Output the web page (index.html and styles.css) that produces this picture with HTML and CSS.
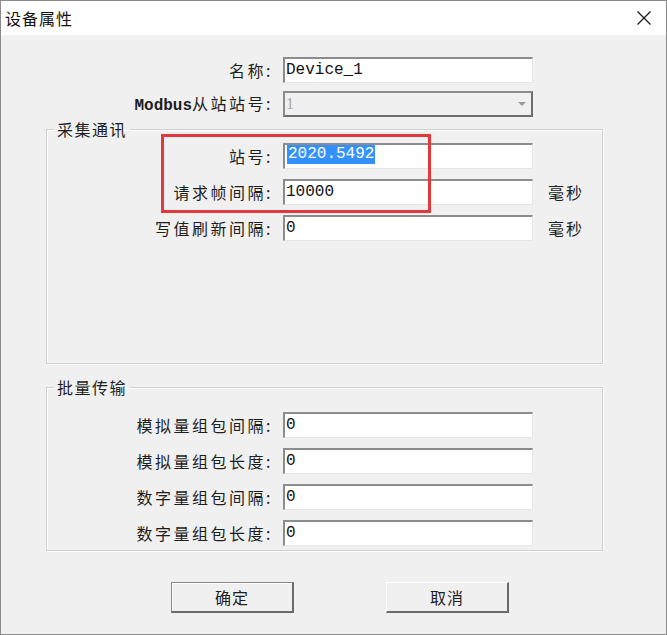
FILE: index.html
```html
<html lang="zh">

<head>
    <meta charset="UTF-8">
    <meta name="viewport" content="width=device-width, initial-scale=1.0">
    <title>设备属性</title>
    <link rel="stylesheet" href="styles.css">
</head>

<body>
    <div class="window">
        <div class="titlebar">
            <span class="title">设备属性</span>
            <svg class="close" width="16" height="16" viewBox="0 0 16 16">
                <path d="M1.5 1.5L14.5 14.5M14.5 1.5L1.5 14.5" stroke="#1a1a1a" stroke-width="1.3" fill="none" />
            </svg>
        </div>
        <div class="content">
            <div class="rows top">
                <div class="row">
                    <div class="label">名称:</div>
                    <div class="field">Device_1</div>
                </div>
                <div class="row">
                    <div class="label"><span class="latin">Modbus</span>从站站号:</div>
                    <div class="field combo">
                        <span>1</span>
                        <span class="arrow"></span>
                    </div>
                </div>
            </div>

            <fieldset class="group comm">
                <legend>采集通讯</legend>
                <div class="rows">
                    <div class="rows highlight">
                        <div class="row">
                            <div class="label">站号:</div>
                            <div class="field"><span class="selected">2020.5492</span></div>
                        </div>
                        <div class="row">
                            <div class="label">请求帧间隔:</div>
                            <div class="field">10000</div>
                            <div class="unit">毫秒</div>
                        </div>
                    </div>
                    <div class="row">
                        <div class="label">写值刷新间隔:</div>
                        <div class="field">0</div>
                        <div class="unit">毫秒</div>
                    </div>
                </div>
            </fieldset>

            <fieldset class="group batch">
                <legend>批量传输</legend>
                <div class="rows">
                    <div class="row">
                        <div class="label">模拟量组包间隔:</div>
                        <div class="field">0</div>
                    </div>
                    <div class="row">
                        <div class="label">模拟量组包长度:</div>
                        <div class="field">0</div>
                    </div>
                    <div class="row">
                        <div class="label">数字量组包间隔:</div>
                        <div class="field">0</div>
                    </div>
                    <div class="row">
                        <div class="label">数字量组包长度:</div>
                        <div class="field">0</div>
                    </div>
                </div>
            </fieldset>

            <div class="buttons">
                <div class="btn default">确定</div>
                <div class="btn">取消</div>
            </div>
        </div>
    </div>
</body>

</html>
```

FILE: styles.css
```css
* {
    margin: 0;
    padding: 0;
    box-sizing: border-box;
}

body {
    font-family: "Noto Sans CJK SC", "Noto Sans", sans-serif;
    font-size: 16px;
    color: #1e1e1e;
    background: #f0f0f0;
}

.window {
    width: 667px;
    height: 635px;
    border: 1px solid #8a8a8a;
    background: #f0f0f0;
}

.titlebar {
    height: 34px;
    background: #fff;
    display: flex;
    align-items: center;
    justify-content: space-between;
    padding: 0 14px 0 4px;
}

.title {
    font-size: 16px;
    letter-spacing: 1px;
    color: #111;
}

.close {
    display: block;
}

.content {
    padding: 22px 0 0 45px;
}

.rows {
    display: flex;
    flex-direction: column;
    gap: 10px;
}

.top {
    gap: 8px;
    padding-left: 1px;
}

.row {
    display: flex;
    align-items: center;
    height: 26px;
}

.label {
    width: 226px;
    text-align: right;
    letter-spacing: 2.5px;
    line-height: 26px;
    white-space: nowrap;
}

.latin {
    font-family: "Liberation Mono", monospace;
    font-weight: bold;
    letter-spacing: 0;
}

.field {
    margin-left: 10px;
    width: 250px;
    height: 26px;
    background: #fff;
    border-top: 2px solid #8c8c8c;
    border-left: 2px solid #8c8c8c;
    border-right: 1px solid #e6e6e6;
    border-bottom: 1px solid #e6e6e6;
    padding-left: 1px;
    font-family: "Liberation Mono", monospace;
    font-size: 16px;
    line-height: 22px;
    color: #111;
    white-space: nowrap;
}

.combo {
    display: flex;
    justify-content: space-between;
    align-items: center;
    background: #f0f0f0;
    color: #a8a8a8;
    border-right: 2px solid #6e6e6e;
    border-bottom: 2px solid #6e6e6e;
    padding-right: 5px;
    font-family: "Liberation Serif", serif;
}

.arrow {
    width: 0;
    height: 0;
    border-left: 4px solid transparent;
    border-right: 4px solid transparent;
    border-top: 4px solid #9a9a9a;
}

.selected {
    display: inline-block;
    background: #3390ff;
    color: #fff;
    line-height: 19px;
    padding: 0 1px;
    margin-left: 1px;
}

.unit {
    margin-left: 15px;
    letter-spacing: 2px;
}

.group {
    width: 557px;
    border: 1px solid #cfcfcf;
    box-shadow: 1px 1px 0 #fff, inset 1px 1px 0 #fff;
    min-inline-size: 0;
}

.group legend {
    margin-left: 7px;
    padding: 0 3px;
    line-height: 20px;
    letter-spacing: 1.5px;
}

.comm {
    margin-top: 2px;
    padding: 4px 0 122px 0;
}

.batch {
    margin-top: 13px;
    padding: 15px 0 4px 0;
}

.highlight {
    position: relative;
}

.highlight::after {
    content: "";
    position: absolute;
    left: 114px;
    top: -9px;
    width: 264px;
    height: 73px;
    border: 3px solid #e3393c;
}

.buttons {
    display: flex;
    gap: 92px;
    margin-top: 31px;
    padding-left: 125px;
}

.btn {
    width: 123px;
    height: 31px;
    display: flex;
    justify-content: center;
    align-items: center;
    letter-spacing: 1px;
    background: #f0f0f0;
    border-top: 1px solid #fff;
    border-left: 1px solid #fff;
    border-right: 2px solid #6a6a6a;
    border-bottom: 2px solid #6a6a6a;
}

.btn.default {
    border-top: 1px solid #8a8a8a;
    border-left: 1px solid #8a8a8a;
    box-shadow: inset 1px 1px 0 #fff;
}
```
